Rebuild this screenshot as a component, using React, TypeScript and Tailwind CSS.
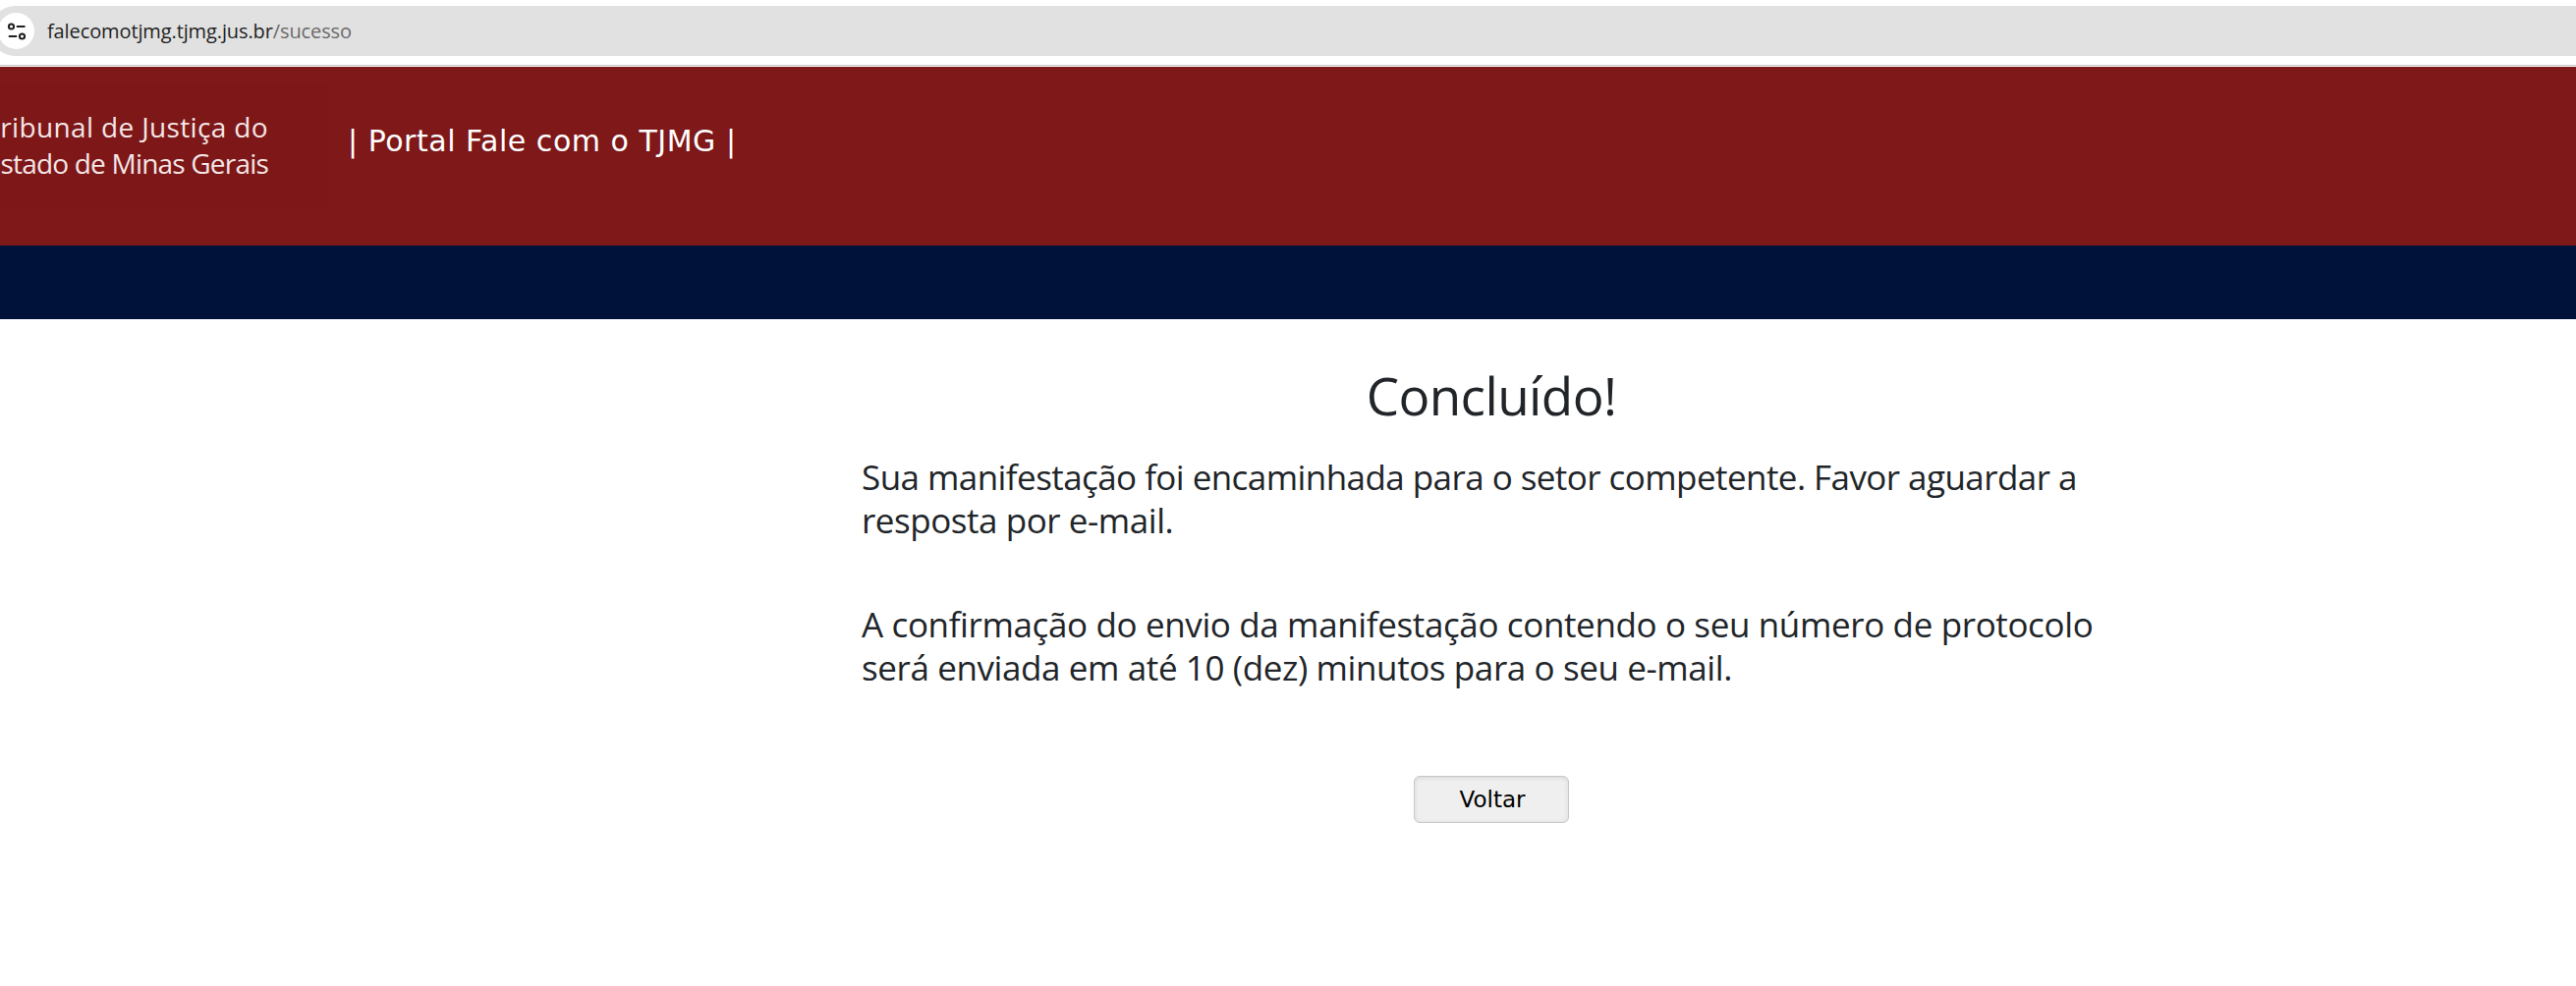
import type React from 'react';

const MESSAGE_LINES: ReadonlyArray<{ readonly id: string; readonly text: string; readonly className: string }> = [
  {
    id: 'forwarded-a',
    text: 'Sua manifestação foi encaminhada para o setor competente. Favor aguardar a',
    className: 'tracking-[-0.565px]',
  },
  { id: 'forwarded-b', text: 'resposta por e-mail.', className: 'tracking-[-0.45px]' },
  {
    id: 'confirmation-a',
    text: 'A confirmação do envio da manifestação contendo o seu número de protocolo',
    className: 'mt-[63px] tracking-[-0.37px]',
  },
  {
    id: 'confirmation-b',
    text: 'será enviada em até 10 (dez) minutos para o seu e-mail.',
    className: 'tracking-[-0.4px]',
  },
];

function SiteSettingsIcon(): React.JSX.Element {
  return (
    <svg width="20" height="20" viewBox="0 0 20 20" fill="none" stroke="#1f1f1f" strokeWidth="2">
      <circle cx="4.5" cy="5" r="2.6" />
      <path d="M9.8 5h8.7M1.8 15h8.4" />
      <circle cx="15.5" cy="15" r="2.6" />
    </svg>
  );
}

function AddressBar(): React.JSX.Element {
  return (
    <div className="h-[68px] bg-white pt-1.5">
      <div className="-ml-2.5 flex h-[51px] items-center rounded-l-full bg-[#e1e1e1] pl-2">
        <div className="flex size-[37px] shrink-0 items-center justify-center rounded-full bg-white">
          <SiteSettingsIcon />
        </div>
        <div className="ml-[13px] text-[20px] tracking-[-0.11px] whitespace-nowrap text-[#1f1f1f]">
          falecomotjmg.tjmg.jus.br<span className="text-[#6a6a6a]">/sucesso</span>
        </div>
      </div>
      <div className="mt-[9px] h-px bg-[#c7c7cc]" />
    </div>
  );
}

function PortalHeader(): React.JSX.Element {
  return (
    <header>
      <div className="flex h-[182px] bg-[#7e1819] text-white">
        <div className="mt-[17px] flex h-32 w-[341px] flex-col items-end bg-[#7d1718] pt-[26px] pr-[68px] text-[28px] leading-[37px] font-medium whitespace-nowrap text-[#f4e6e6]">
          <div className="tracking-[0.35px]">ribunal de Justiça do</div>
          <div className="tracking-[-0.8px]">stado de Minas Gerais</div>
        </div>
        <h1 className="ml-[13px] pt-[58px] font-['DejaVu_Sans',sans-serif] text-[30px] leading-9 tracking-[0.52px] whitespace-nowrap">
          | Portal Fale com o TJMG |
        </h1>
      </div>
      <div className="h-[75px] bg-[#00113a]" />
    </header>
  );
}

export default function App(): React.JSX.Element {
  return (
    <div className="h-[1004px] w-[2622px] overflow-hidden bg-white font-['Open_Sans',sans-serif] text-[#212529]">
      <AddressBar />
      <PortalHeader />
      <main className="ml-[877px] flex w-[1282px] flex-col items-center pt-[46px]">
        <h2 className="text-[53px] leading-[64px] tracking-[-0.6px] whitespace-nowrap">Concluído!</h2>
        <div className="mt-[29px] w-full text-[35px] leading-[43.5px] whitespace-nowrap">
          {MESSAGE_LINES.map((line) => (
            <p key={line.id} className={line.className}>
              {line.text}
            </p>
          ))}
        </div>
        <button
          type="button"
          className="mt-[89px] h-12 w-[158px] rounded-md border border-[#c8c8c8] bg-[#efefef] pl-0.5 font-['DejaVu_Sans',sans-serif] text-[23px] text-black shadow-[inset_0_1px_5px_rgba(0,0,0,0.1)]"
        >
          Voltar
        </button>
      </main>
    </div>
  );
}
